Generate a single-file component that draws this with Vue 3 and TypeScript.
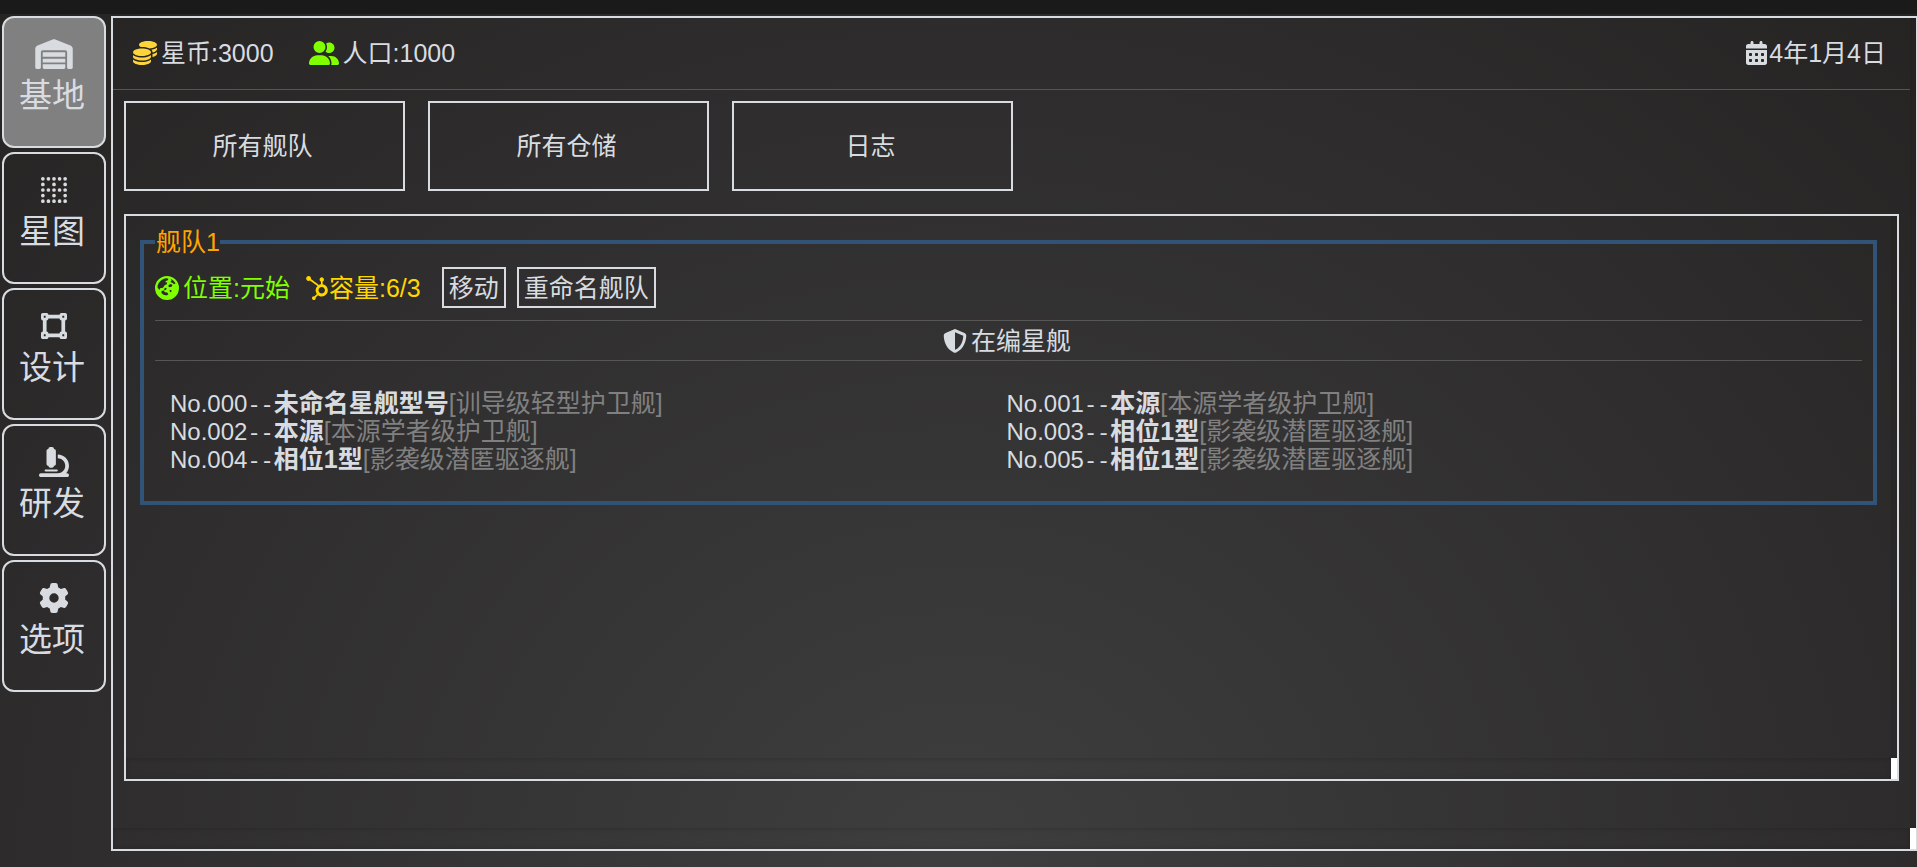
<script setup lang="ts">
import { ref } from 'vue'

interface NavItem { key: string; label: string; box: string; width: number; path: string }
interface Ship { no: string; name: string; model: string }

const icons = {
  warehouse: 'M0 488V171.3c0-26.2 15.9-49.7 40.2-59.4L308.1 4.8c7.6-3.1 16.1-3.1 23.8 0L599.8 111.9c24.3 9.7 40.2 33.3 40.2 59.4V488c0 13.3-10.7 24-24 24H568c-13.3 0-24-10.7-24-24V224c0-17.7-14.3-32-32-32H128c-17.7 0-32 14.3-32 32V488c0 13.3-10.7 24-24 24H24c-13.3 0-24-10.7-24-24zm488 24l-336 0c-13.3 0-24-10.7-24-24V432H512l0 56c0 13.3-10.7 24-24 24zM128 400V336H512v64H128zm0-96V224H512l0 80H128z',
  vector: 'M368 80h32v32H368V80zM352 32c-17.7 0-32 14.3-32 32H128c0-17.7-14.3-32-32-32H32C14.3 32 0 46.3 0 64v64c0 17.7 14.3 32 32 32V352c-17.7 0-32 14.3-32 32v64c0 17.7 14.3 32 32 32H96c17.7 0 32-14.3 32-32H320c0 17.7 14.3 32 32 32h64c17.7 0 32-14.3 32-32V384c0-17.7-14.3-32-32-32V160c17.7 0 32-14.3 32-32V64c0-17.7-14.3-32-32-32H352zM96 160c17.7 0 32-14.3 32-32H320c0 17.7 14.3 32 32 32V352c-17.7 0-32 14.3-32 32H128c0-17.7-14.3-32-32-32V160zM48 400H80v32H48V400zm320 32V400h32v32H368zM48 112V80H80v32H48z',
  microscope: 'M160 32c0-17.7 14.3-32 32-32h32c17.7 0 32 14.3 32 32c17.7 0 32 14.3 32 32V288c0 17.7-14.3 32-32 32c0 17.7-14.3 32-32 32H192c-17.7 0-32-14.3-32-32c-17.7 0-32-14.3-32-32V64c0-17.7 14.3-32 32-32zM32 448H320c70.7 0 128-57.3 128-128s-57.3-128-128-128V128c106 0 192 86 192 192c0 49.2-18.5 94-48.9 128H480c17.7 0 32 14.3 32 32s-14.3 32-32 32H320 32c-17.7 0-32-14.3-32-32s14.3-32 32-32zm80-64H304c8.8 0 16 7.2 16 16s-7.2 16-16 16H112c-8.8 0-16-7.2-16-16s7.2-16 16-16z',
  gear: 'M495.9 166.6c3.2 8.7 .5 18.4-6.4 24.6l-43.3 39.4c1.1 8.3 1.7 16.8 1.7 25.4s-.6 17.1-1.7 25.4l43.3 39.4c6.9 6.2 9.6 15.9 6.4 24.6c-4.4 11.9-9.7 23.3-15.8 34.3l-4.7 8.1c-6.6 11-14 21.4-22.1 31.2c-5.9 7.2-15.7 9.6-24.5 6.8l-55.7-17.7c-13.4 10.3-28.2 18.9-44 25.4l-12.5 57.1c-2 9.1-9 16.3-18.2 17.8c-13.8 2.3-28 3.5-42.5 3.5s-28.7-1.2-42.5-3.5c-9.2-1.5-16.2-8.7-18.2-17.8l-12.5-57.1c-15.8-6.5-30.6-15.1-44-25.4L83.1 425.9c-8.8 2.8-18.6 .3-24.5-6.8c-8.1-9.8-15.5-20.2-22.1-31.2l-4.7-8.1c-6.1-11-11.4-22.4-15.8-34.3c-3.2-8.7-.5-18.4 6.4-24.6l43.3-39.4C64.6 273.1 64 264.6 64 256s.6-17.1 1.7-25.4L22.4 191.2c-6.9-6.2-9.6-15.9-6.4-24.6c4.4-11.9 9.7-23.3 15.8-34.3l4.7-8.1c6.6-11 14-21.4 22.1-31.2c5.9-7.2 15.7-9.6 24.5-6.8l55.7 17.7c13.4-10.3 28.2-18.9 44-25.4l12.5-57.1c2-9.1 9-16.3 18.2-17.8C227.3 1.2 241.5 0 256 0s28.7 1.2 42.5 3.5c9.2 1.5 16.2 8.7 18.2 17.8l12.5 57.1c15.8 6.5 30.6 15.1 44 25.4l55.7-17.7c8.8-2.8 18.6-.3 24.5 6.8c8.1 9.8 15.5 20.2 22.1 31.2l4.7 8.1c6.1 11 11.4 22.4 15.8 34.3zM256 336a80 80 0 1 0 0-160 80 80 0 1 0 0 160z',
}

// Star map glyph: a 5 x 5 dot lattice with four openings
const dots = [0, 1, 2, 3, 4]
  .flatMap((r) => [0, 1, 2, 3, 4].map((c) => ({ r, c })))
  .filter(({ r, c }) => r % 2 === 0 || c % 2 === 0)
  .map(({ r, c }) => `M${c * 96} ${64 + r * 96}a32 32 0 1 0 64 0a32 32 0 1 0 -64 0z`)
  .join('')

const nav: NavItem[] = [
  { key: 'base', label: '基地', box: '0 0 640 512', width: 38, path: icons.warehouse },
  { key: 'map', label: '星图', box: '0 0 448 512', width: 26, path: dots },
  { key: 'design', label: '设计', box: '0 0 448 512', width: 26, path: icons.vector },
  { key: 'research', label: '研发', box: '0 0 512 512', width: 30, path: icons.microscope },
  { key: 'options', label: '选项', box: '0 0 512 512', width: 30, path: icons.gear },
]
const active = ref('base')
const tabs = ['所有舰队', '所有仓储', '日志']
const ships: Ship[] = [
  { no: '000', name: '未命名星舰型号', model: '训导级轻型护卫舰' },
  { no: '001', name: '本源', model: '本源学者级护卫舰' },
  { no: '002', name: '本源', model: '本源学者级护卫舰' },
  { no: '003', name: '相位1型', model: '影袭级潜匿驱逐舰' },
  { no: '004', name: '相位1型', model: '影袭级潜匿驱逐舰' },
  { no: '005', name: '相位1型', model: '影袭级潜匿驱逐舰' },
]
</script>

<template>
  <div class="game">
    <nav class="side">
      <button
        v-for="item in nav"
        :key="item.key"
        type="button"
        class="side-btn"
        :class="{ active: item.key === active }"
        @click="active = item.key"
      >
        <svg :viewBox="item.box" :width="item.width" height="30" aria-hidden="true"><path :d="item.path" /></svg>
        <span>{{ item.label }}</span>
      </button>
    </nav>

    <main class="main">
      <header class="status">
        <span class="stat">
          <svg class="coin" viewBox="0 0 512 512" width="24" height="24" aria-hidden="true"><path d="M512 80c0 18-14.3 34.6-38.4 48c-29.1 16.1-72.5 27.5-122.3 30.9c-3.7-1.8-7.4-3.5-11.3-5C300.6 137.4 248.2 128 192 128c-8.3 0-16.4 .2-24.5 .6l-1.1-.6C142.3 114.6 128 98 128 80c0-44.2 86-80 192-80S512 35.8 512 80zM160.7 161.1c10.2-.7 20.7-1.1 31.3-1.1c62.2 0 117.4 12.3 152.5 31.4C369.3 204.9 384 221.7 384 240c0 4-.7 7.9-2.1 11.7c-4.6 13.2-17 25.3-35 35.5c-.4 .2-.9 .5-1.3 .7c-35 19.4-90.8 32-153.6 32c-59.6 0-112.9-11.3-148.2-29.1c-1.9-.9-3.7-1.9-5.5-2.9C14.3 274.6 0 258 0 240c0-34.8 53.4-64.5 128-75.4c10.5-1.5 21.4-2.7 32.7-3.5zM416 240c0-21.9-10.6-39.9-24.1-53.4c28.3-4.4 54.2-11.4 76.2-20.5c16.3-6.8 31.5-15.2 43.9-25.5V176c0 19.3-16.5 37.1-43.8 50.9c-14.6 7.4-32.4 13.7-52.4 18.5c.1-1.8 .2-3.5 .2-5.3zm-32 96c0 18-14.3 34.6-38.4 48c-1.8 1-3.6 1.9-5.5 2.9C304.9 404.7 251.6 416 192 416c-62.8 0-118.6-12.6-153.6-32C14.3 370.6 0 354 0 336V300.6c12.5 10.3 27.6 18.7 43.9 25.5C83.4 342.6 135.8 352 192 352s108.6-9.4 148.1-25.9c7.8-3.2 15.3-6.9 22.4-10.9c6.1-3.4 11.8-7.2 17.2-11.2c1.5-1.1 2.9-2.3 4.3-3.4V336zm32 0V278.1c19-4.2 36.5-9.5 52.1-16c16.3-6.8 31.5-15.2 43.9-25.5V272c0 10.5-5 21-14.9 30.9c-16.3 16.3-45 29.7-81.3 38.4c.1-1.7 .2-3.5 .2-5.3zM192 448c56.2 0 108.6-9.4 148.1-25.9c16.3-6.8 31.5-15.2 43.9-25.5V432c0 44.2-86 80-192 80S0 476.2 0 432V396.6c12.5 10.3 27.6 18.7 43.9 25.5C83.4 438.6 135.8 448 192 448z" /></svg>
          <span>星币:3000</span>
        </span>
        <span class="stat">
          <svg class="people" viewBox="0 0 640 512" width="30" height="24" aria-hidden="true"><path d="M96 128a128 128 0 1 1 256 0A128 128 0 1 1 96 128zM0 482.3C0 383.8 79.8 304 178.3 304h91.4C368.2 304 448 383.8 448 482.3c0 16.4-13.3 29.7-29.7 29.7H29.7C13.3 512 0 498.7 0 482.3zM609.3 512H471.4c5.4-9.4 8.6-20.3 8.6-32v-8c0-60.7-27.1-115.2-69.8-151.8c2.4-.1 4.7-.2 7.1-.2h61.4C567.8 320 640 392.2 640 481.3c0 17-13.8 30.7-30.7 30.7zM432 256c-31 0-59-12.6-79.3-32.9C372.4 196.5 384 163.6 384 128c0-26.8-6.6-52.1-18.3-74.3C384.3 40.1 407.2 32 432 32c61.9 0 112 50.1 112 112s-50.1 112-112 112z" /></svg>
          <span>人口:1000</span>
        </span>
        <span class="stat date">
          <svg viewBox="0 0 448 512" width="21" height="24" aria-hidden="true"><path d="M128 0c17.7 0 32 14.3 32 32V64H288V32c0-17.7 14.3-32 32-32s32 14.3 32 32V64h48c26.5 0 48 21.5 48 48v48H0V112C0 85.5 21.5 64 48 64H96V32c0-17.7 14.3-32 32-32zM0 192H448V464c0 26.5-21.5 48-48 48H48c-26.5 0-48-21.5-48-48V192zm64 80v32c0 8.8 7.2 16 16 16h32c8.8 0 16-7.2 16-16V272c0-8.8-7.2-16-16-16H80c-8.8 0-16 7.2-16 16zm128 0v32c0 8.8 7.2 16 16 16h32c8.8 0 16-7.2 16-16V272c0-8.8-7.2-16-16-16H208c-8.8 0-16 7.2-16 16zm144-16c-8.8 0-16 7.2-16 16v32c0 8.8 7.2 16 16 16h32c8.8 0 16-7.2 16-16V272c0-8.8-7.2-16-16-16H336zM64 400v32c0 8.8 7.2 16 16 16h32c8.8 0 16-7.2 16-16V400c0-8.8-7.2-16-16-16H80c-8.8 0-16 7.2-16 16zm144-16c-8.8 0-16 7.2-16 16v32c0 8.8 7.2 16 16 16h32c8.8 0 16-7.2 16-16V400c0-8.8-7.2-16-16-16H208zm112 16v32c0 8.8 7.2 16 16 16h32c8.8 0 16-7.2 16-16V400c0-8.8-7.2-16-16-16H336c-8.8 0-16 7.2-16 16z" /></svg>
          <span>4年1月4日</span>
        </span>
      </header>

      <div class="tabs">
        <button v-for="tab in tabs" :key="tab" type="button" class="tab">{{ tab }}</button>
      </div>

      <section class="panel">
        <fieldset class="fleet">
          <legend>舰队1</legend>
          <div class="info">
            <span class="stat place">
              <svg viewBox="0 0 512 512" width="24" height="24" aria-hidden="true"><path fill-rule="evenodd" d="M256 0a256 256 0 1 0 0 512a256 256 0 1 0 0-512zM52 240C60 140 140 56 250 48l36 10l-12 34l-44 12l-6 30l34 4l-4 36l-44 20l-40 54l-62 12l-16 40zM330 60l60 34l48 60l-30 20l-40-30l-44-14l30-28zM290 190l44-20l36 16l-8 40l-46 16l-30-18zM210 250l40 10l-16 40l-44 2zM140 320l46-10l24 36l50 6l26 38l-40 28l-64-16l-44-38zM310 300l36-4l10 34l-34 14z" /></svg>
              <span>位置:元始</span>
            </span>
            <span class="stat capacity">
              <svg viewBox="0 0 512 512" width="24" height="24" aria-hidden="true"><path d="M267.4 211.6c-25.1 23.7-40.8 57.3-40.8 94.6 0 29.3 9.7 56.3 26 78L203.1 434c-4.4-1.6-9.1-2.5-14-2.5-10.8 0-20.9 4.2-28.5 11.8-7.6 7.6-11.8 17.8-11.8 28.6s4.2 20.9 11.8 28.5c7.6 7.6 17.8 11.6 28.5 11.6 10.8 0 20.9-3.9 28.6-11.6 7.6-7.6 11.8-17.8 11.8-28.5 0-4.2-.6-8.2-1.9-12.1l50-50.2c22 16.9 49.4 26.9 79.3 26.9 71.9 0 130-58.3 130-130.2 0-65.2-47.7-119.2-110.2-128.7V116c17.5-7.4 28.2-23.8 28.2-42.9 0-26.1-20.9-47.9-47-47.9S311.2 47 311.2 73.1c0 19.1 10.7 35.5 28.2 42.9v61.2c-15.2 2.1-29.6 6.7-42.7 13.6-27.6-20.9-117.5-85.7-168.9-124.8 1.2-4.4 2-9 2-13.8C129.8 23.4 106.3 0 77.4 0 48.6 0 25.2 23.4 25.2 52.2c0 28.9 23.4 52.3 52.2 52.3 9.8 0 18.9-2.9 26.8-7.6l163.2 114.7zm89.5 163.6c-38.1 0-69-30.9-69-69s30.9-69 69-69 69 30.9 69 69-30.9 69-69 69z" /></svg>
              <span>容量:6/3</span>
            </span>
            <button type="button" class="action">移动</button>
            <button type="button" class="action">重命名舰队</button>
          </div>
          <h2 class="heading">
            <svg viewBox="0 0 512 512" width="24" height="24" aria-hidden="true"><path d="M256 0c4.6 0 9.2 1 13.4 2.9L457.7 82.8c22 9.3 38.4 31 38.3 57.2c-.5 99.2-41.3 280.7-213.6 363.2c-16.7 8-36.1 8-52.8 0C57.3 420.7 16.5 239.2 16 140c-.1-26.2 16.3-47.9 38.3-57.2L242.7 2.9C246.8 1 251.4 0 256 0zm0 66.8V444.8C394 378 431.1 230.1 432 141.4L256 66.8z" /></svg>
            <span>在编星舰</span>
          </h2>
          <ul class="ships">
            <li v-for="ship in ships" :key="ship.no">
              <span class="no">No.{{ ship.no }}</span><span class="dash">--</span><b>{{ ship.name }}</b><span class="model">[{{ ship.model }}]</span>
            </li>
          </ul>
        </fieldset>
        <i class="track-x"></i><i class="track-y"></i><i class="corner"></i>
      </section>
      <i class="track-x"></i><i class="track-y"></i><i class="corner"></i>
    </main>
  </div>
</template>

<style>
body {
  margin: 0;
  background: #1a1a1a;
}
</style>

<style scoped>
* {
  box-sizing: border-box;
}
.game {
  display: flex;
  gap: 5px;
  height: 100vh;
  padding: 2px 0 16px 2px;
  border-top: 14px solid #1a1a1a;
  background: radial-gradient(ellipse at 50% 100%, #3e3e3e 0%, #262323 100%);
  color: #d8dce0;
  font: 25px/28px "Liberation Sans", "Noto Sans CJK SC", sans-serif;
}
svg {
  display: block;
  flex: none;
  fill: currentColor;
}
button {
  border: 2px solid #d8dce0;
  background: transparent;
  color: inherit;
  font: inherit;
  cursor: pointer;
}
.side {
  display: flex;
  flex: none;
  flex-direction: column;
  gap: 4px;
  width: 104px;
}
.side-btn {
  display: flex;
  flex-direction: column;
  align-items: center;
  gap: 5px;
  height: 132px;
  padding: 21px 0 0;
  border-radius: 12px;
  font-size: 33px;
  line-height: 44px;
}
.side-btn span {
  margin-right: 4px;
}
.side-btn.active {
  background: #808080;
}
.main {
  position: relative;
  display: flex;
  flex: 1;
  flex-direction: column;
  min-width: 0;
  border: 2px solid #d8dce0;
  border-right-width: 1px;
}
.status {
  display: flex;
  align-items: center;
  gap: 35px;
  height: 72px;
  margin-right: 6px;
  padding: 0 24px 2px 20px;
  border-bottom: 1px solid #565656;
}
.stat {
  display: flex;
  align-items: center;
  gap: 4px;
}
.date {
  gap: 2px;
  margin-left: auto;
}
.coin {
  color: #ffd43b;
}
.people {
  color: #7fff00;
}
.tabs {
  display: flex;
  gap: 23px;
  padding: 11px 11px 0;
}
.tab {
  width: 281px;
  height: 90px;
  padding: 0 4px 0 0;
}
.panel {
  position: relative;
  flex: 1;
  margin: 23px 17px 68px 11px;
  padding: 12px 20px 0 14px;
  border: 2px solid #d8dce0;
}
.fleet {
  min-width: 0;
  margin: 0;
  padding: 9px 11px 28px;
  border: 4px solid #325378;
}
legend {
  padding: 0 0 0 1px;
  color: #ffa500;
}
.info {
  display: flex;
  align-items: center;
  height: 55px;
  padding-bottom: 10px;
}
.place {
  margin-right: 15px;
  color: #7fff00;
}
.capacity {
  gap: 0;
  margin-right: 21px;
  color: #ffd700;
}
.action {
  height: 41px;
  margin-right: 11px;
  padding: 0 5px;
}
.heading {
  display: flex;
  align-items: center;
  justify-content: center;
  gap: 4px;
  height: 41px;
  margin: 0;
  padding-right: 3px;
  border: solid #565656;
  border-width: 1px 0;
  font-size: 25px;
  font-weight: 400;
}
.ships {
  display: grid;
  grid-template-columns: 1fr 1fr;
  margin: 28px 0 0;
  padding: 0 19px 0 15px;
  list-style: none;
}
.ships li {
  height: 28px;
  white-space: nowrap;
}
.no {
  font-size: 24px;
}
.dash {
  font-family: "Liberation Mono", monospace;
  font-size: 22px;
}
.model {
  color: #808080;
}
.track-x,
.track-y,
.corner {
  position: absolute;
  right: 0;
  bottom: 0;
}
.track-x {
  right: 6px;
  left: 0;
  height: 21px;
  box-shadow: inset 0 0 5px rgba(0, 0, 0, 0.2);
}
.track-y {
  top: 0;
  bottom: 21px;
  width: 6px;
  box-shadow: inset 0 0 5px rgba(0, 0, 0, 0.2);
}
.corner {
  width: 6px;
  height: 21px;
  background: #fff;
}
</style>
